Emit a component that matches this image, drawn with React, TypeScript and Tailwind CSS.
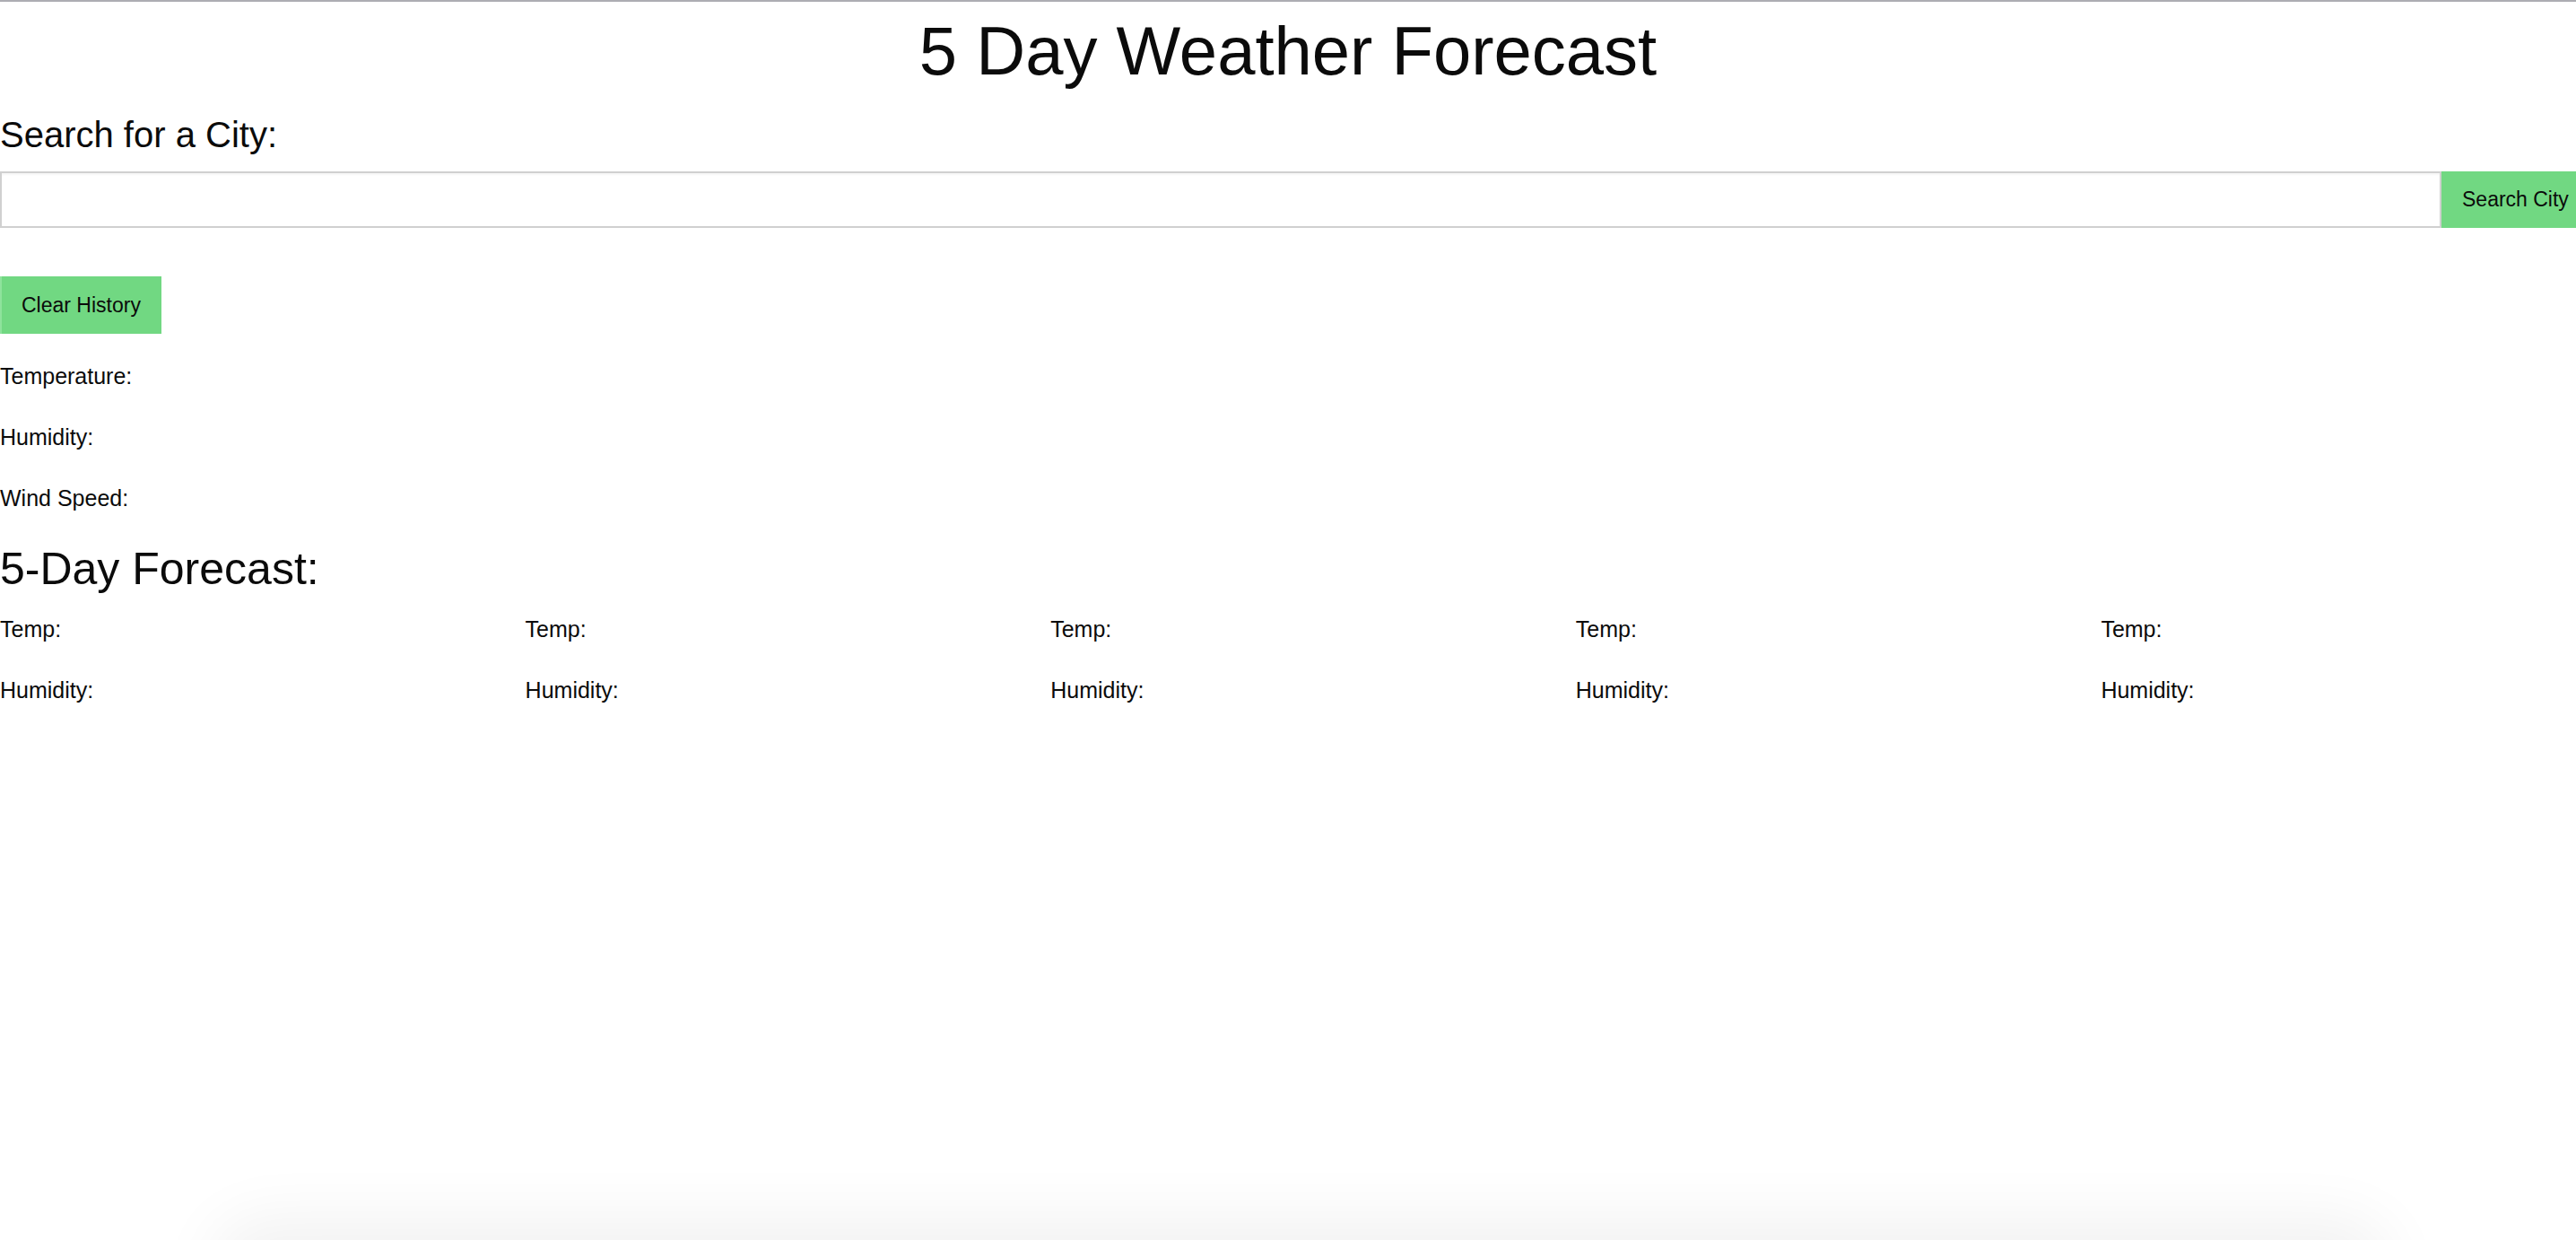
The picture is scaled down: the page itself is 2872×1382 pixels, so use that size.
import React from "react"

const days = [1, 2, 3, 4, 5]

export default function App() {
  return (
    <div
      className="relative min-h-[1382px] overflow-hidden bg-white text-[#0b0b0b] border-t-2 border-[#adadb3]"
      style={{ fontFamily: '"Liberation Sans", Arial, sans-serif' }}
    >
      {/* Header */}
      <h1 className="pt-[13px] text-center text-[76px] leading-[84px] font-normal">5 Day Weather Forecast</h1>

      <h2 className="mt-[27px] text-[40px] leading-[48px] font-normal">Search for a City:</h2>

      {/* Search row */}
      <div className="mt-[17px] flex">
        <input
          type="text"
          className="h-[63px] w-[2722px] shrink-0 border-2 border-[#d0d0d0] bg-white px-3 text-[24px] outline-none shadow-[inset_0_2px_2px_rgba(0,0,0,0.04)]"
        />
        <button className="h-[63px] shrink-0 bg-[#71d882] px-[23px] text-[23px] text-[#0b0b0b]">Search City</button>
      </div>

      <button className="mt-[54px] block h-[64px] bg-[#71d882] pl-[22px] pr-[23px] text-[23px] text-[#0b0b0b] border-l-2 border-[#8ee39c]">
        Clear History
      </button>

      {/* Current weather */}
      <div className="mt-[29px] flex flex-col gap-[32px] text-[25px] leading-[36px]">
        <p>Temperature:</p>
        <p>Humidity:</p>
        <p>Wind Speed:</p>
      </div>

      <h3 className="mt-[33px] text-[50px] leading-[57px] font-normal">5-Day Forecast:</h3>

      {/* Forecast columns */}
      <div className="mt-[20px] grid grid-cols-[repeat(5,585.6px)]">
        {days.map((d) => (
          <div key={d} className="flex flex-col gap-[32px] text-[25px] leading-[36px]">
            <p>Temp:</p>
            <p>Humidity:</p>
          </div>
        ))}
      </div>

      {/* soft shadow peeking from below the window */}
      <div className="pointer-events-none absolute bottom-[-70px] left-[260px] right-[230px] h-[70px] rounded-[60px] shadow-[0_0_70px_25px_rgba(0,0,0,0.055)]" />
    </div>
  )
}
